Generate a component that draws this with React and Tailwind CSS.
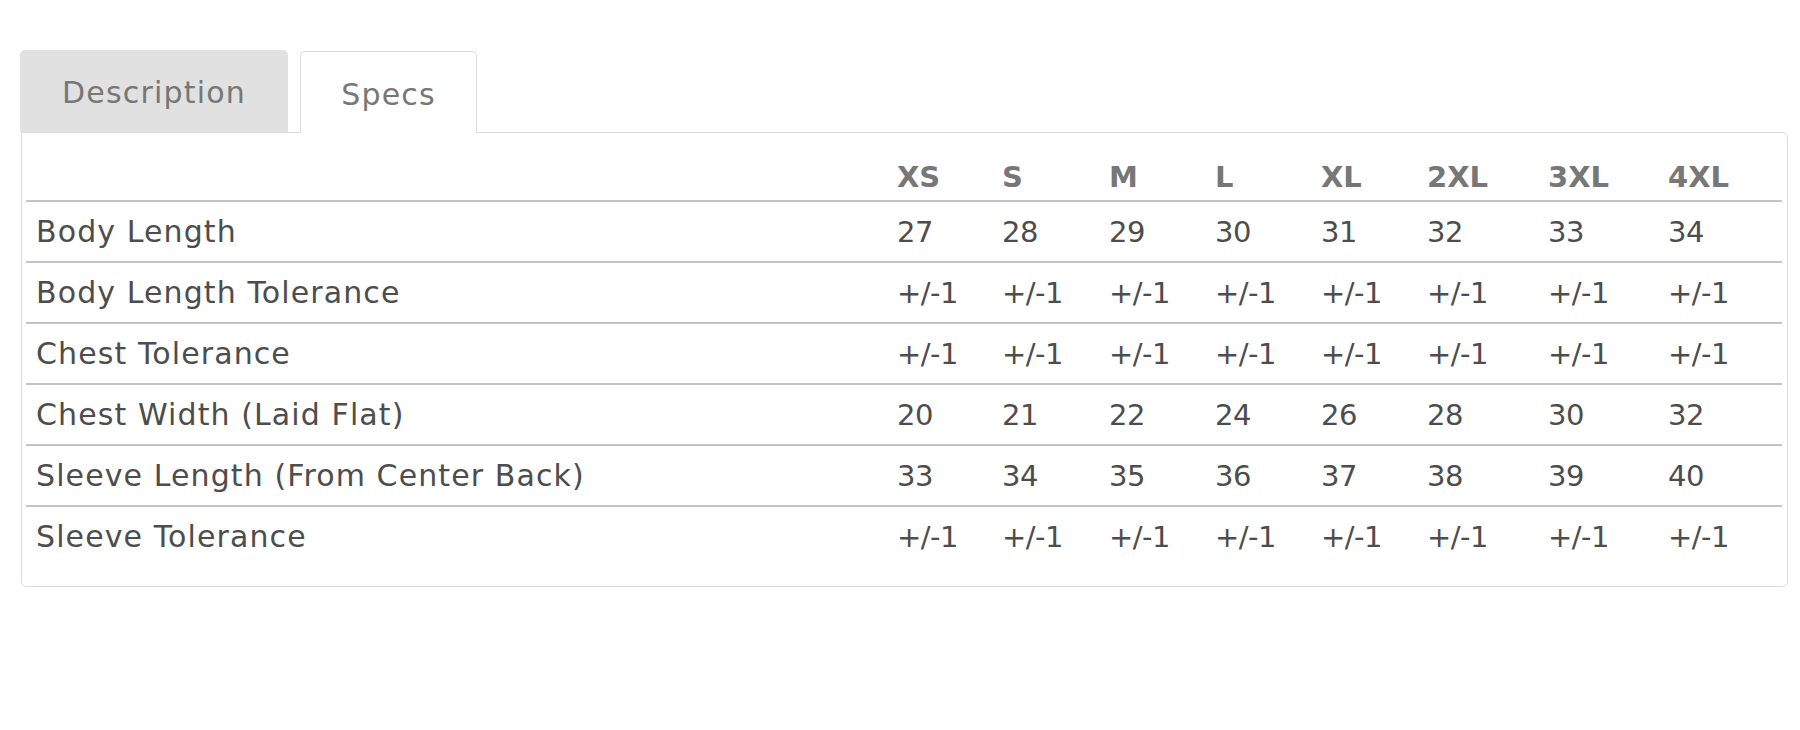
export default function App() {
  const sizes = ["XS", "S", "M", "L", "XL", "2XL", "3XL", "4XL"];
  const widths = ["w-[105px]", "w-[107px]", "w-[106px]", "w-[106px]", "w-[106px]", "w-[121px]", "w-[120px]", "w-[124px]"];
  const rows = [
    ["Body Length", "27", "28", "29", "30", "31", "32", "33", "34"],
    ["Body Length Tolerance", "+/-1", "+/-1", "+/-1", "+/-1", "+/-1", "+/-1", "+/-1", "+/-1"],
    ["Chest Tolerance", "+/-1", "+/-1", "+/-1", "+/-1", "+/-1", "+/-1", "+/-1", "+/-1"],
    ["Chest Width (Laid Flat)", "20", "21", "22", "24", "26", "28", "30", "32"],
    ["Sleeve Length (From Center Back)", "33", "34", "35", "36", "37", "38", "39", "40"],
    ["Sleeve Tolerance", "+/-1", "+/-1", "+/-1", "+/-1", "+/-1", "+/-1", "+/-1", "+/-1"],
  ];
  return (
    <div className="w-[1800px] h-[730px] bg-white pt-[50px] pl-[20px] font-['DejaVu_Sans',sans-serif]">
      <div className="w-[1768px]">
        <div className="flex items-end gap-[12px]">
          <div className="w-[268px] h-[82px] rounded-t-[5px] bg-[#e1e1e1] flex items-center justify-center pt-[3px] text-[30px] tracking-[1.2px] text-[#777]">
            Description
          </div>
          <div className="w-[177px] h-[82px] rounded-t-[5px] bg-white border border-b-0 border-[#dcdcdc] flex items-center justify-center pt-[3px] text-[30px] tracking-[1.2px] text-[#777] relative z-10 -mb-px">
            Specs
          </div>
        </div>
        <div className="border border-[#dcdcdc] rounded-b-[5px] rounded-tr-[5px] ml-px px-[4px] pt-[5px] pb-[19px]">
          <table className="w-[1756px] border-collapse table-fixed text-[29px] text-[#4d4d4d]">
            <thead>
              <tr className="border-b-2 border-[#c4c4c4]">
                <th className="w-[861px] h-[63px]"></th>
                {sizes.map((s, i) => (
                  <th key={s} className={`${widths[i]} text-left font-bold text-[#777] pl-[10px] align-bottom pb-[3px] leading-[40px]`}>
                    {s}
                  </th>
                ))}
              </tr>
            </thead>
            <tbody>
              {rows.map((r, ri) => (
                <tr key={ri} className={ri < rows.length - 1 ? "border-b-2 border-[#c4c4c4]" : ""}>
                  {r.map((c, ci) =>
                    ci === 0 ? (
                      <td key={ci} className="h-[61px] pl-[10px] text-left align-middle leading-[40px] whitespace-nowrap text-[30px] tracking-[1.1px]">
                        {c}
                      </td>
                    ) : (
                      <td key={ci} className="h-[61px] pl-[10px] text-left align-middle leading-[40px] whitespace-nowrap tracking-[-0.5px]">
                        {c}
                      </td>
                    )
                  )}
                </tr>
              ))}
            </tbody>
          </table>
        </div>
      </div>
    </div>
  );
}
